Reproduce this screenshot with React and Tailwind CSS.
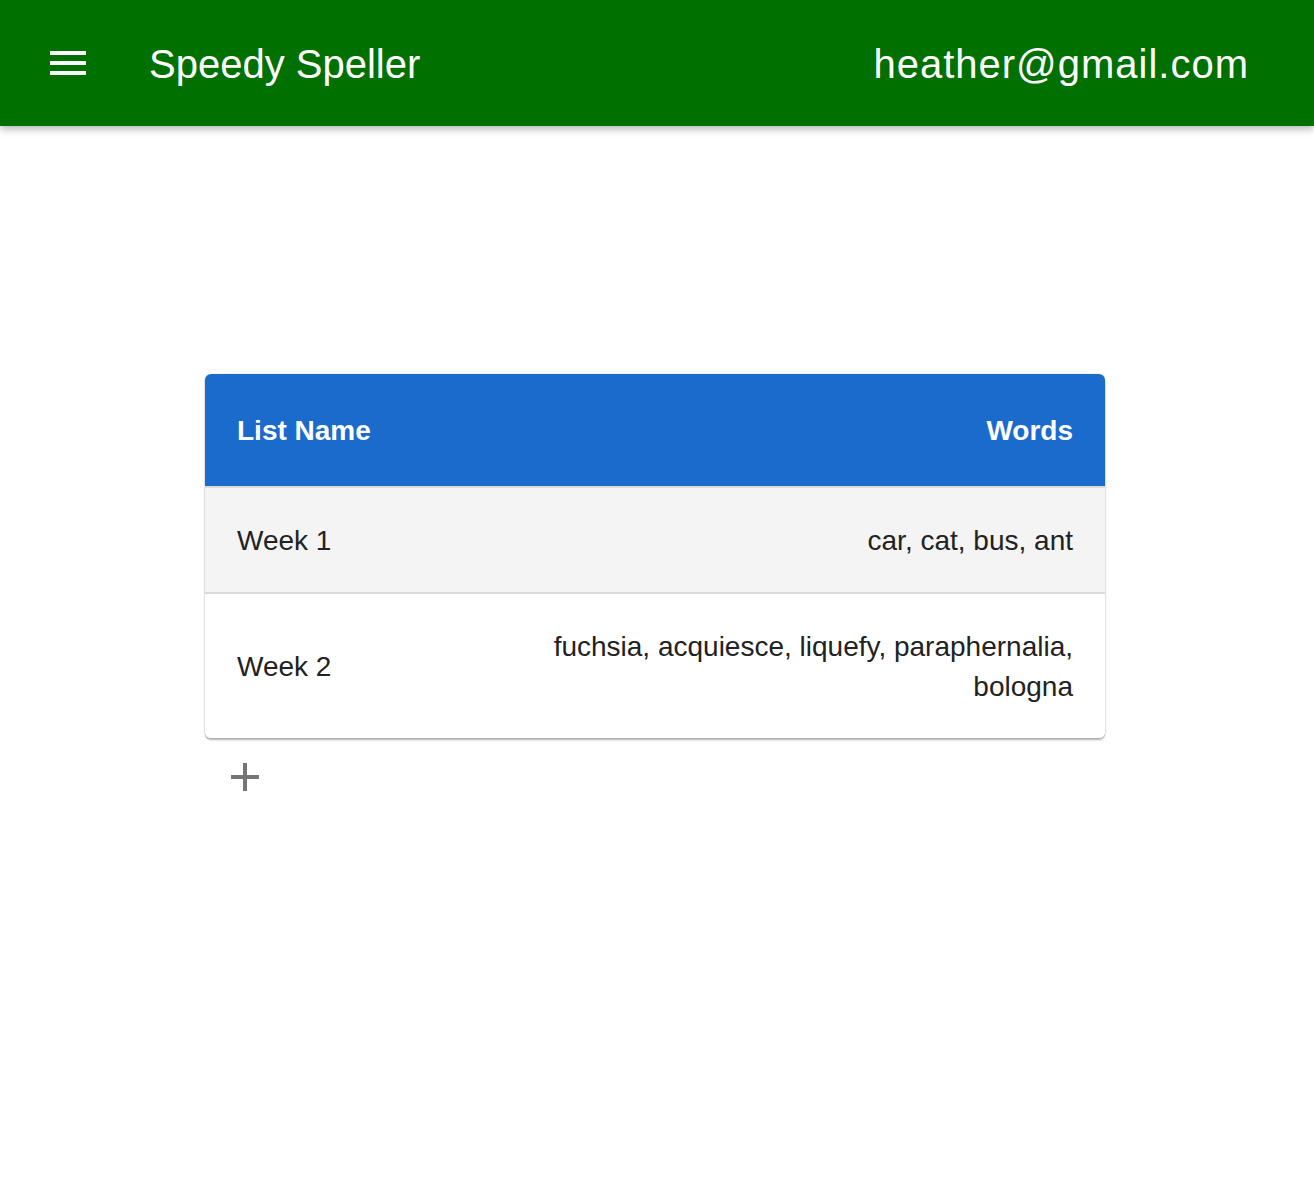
import React from 'react';

const lists = [
  { id: 1, name: 'Week 1', words: 'car, cat, bus, ant' },
  { id: 2, name: 'Week 2', words: 'fuchsia, acquiesce, liquefy, paraphernalia, bologna' },
];

const App = () => {
  return (
    <div className="min-h-[1190px] bg-white font-['Liberation_Sans',Arial,sans-serif]">
      <header className="relative z-10 flex h-[126px] items-center bg-[#007000] shadow-[0_3px_8px_rgba(0,0,0,0.3)]">
        <button className="ml-[50px] flex w-[36px] flex-col gap-[6px]">
          <span className="block h-[4px] w-[36px] bg-white" />
          <span className="block h-[4px] w-[36px] bg-white" />
          <span className="block h-[4px] w-[36px] bg-white" />
        </button>
        <h1 className="ml-[63px] mt-[1px] text-[40px] leading-none text-white">Speedy Speller</h1>
        <span className="ml-auto mr-[65px] mt-[1px] text-[40px] leading-none tracking-[1px] text-white">heather@gmail.com</span>
      </header>

      <main className="pt-[248px]">
        <div className="ml-[205px] w-[900px]">
          <div className="overflow-hidden rounded-[6px] bg-white shadow-[0_2px_2px_rgba(0,0,0,0.3),0_0_2px_rgba(0,0,0,0.15)]">
            <div className="grid grid-cols-[1fr_580px] bg-[#1a6bcc] px-[32px] pb-[35px] pt-[37px] text-[28px] font-bold leading-[40px] text-white">
              <div>List Name</div>
              <div className="text-right">Words</div>
            </div>
            {lists.map((list, i) => (
              <div
                key={list.id}
                className={`grid grid-cols-[1fr_580px] items-center border-t-2 border-[#dadada] px-[32px] pb-[31px] pt-[33px] text-[28px] leading-[40px] text-[#222] ${i % 2 === 0 ? 'bg-[#f4f4f4]' : 'bg-white'}`}
              >
                <div>{list.name}</div>
                <div className="text-right">{list.words}</div>
              </div>
            ))}
          </div>
          <button className="ml-[26px] mt-[25px] block h-[28px] w-[28px]">
            <svg width="28" height="28" viewBox="0 0 28 28">
              <rect x="12" y="0" width="4" height="28" fill="#757575" />
              <rect x="0" y="12" width="28" height="4" fill="#757575" />
            </svg>
          </button>
        </div>
      </main>
    </div>
  );
};

export default App;
